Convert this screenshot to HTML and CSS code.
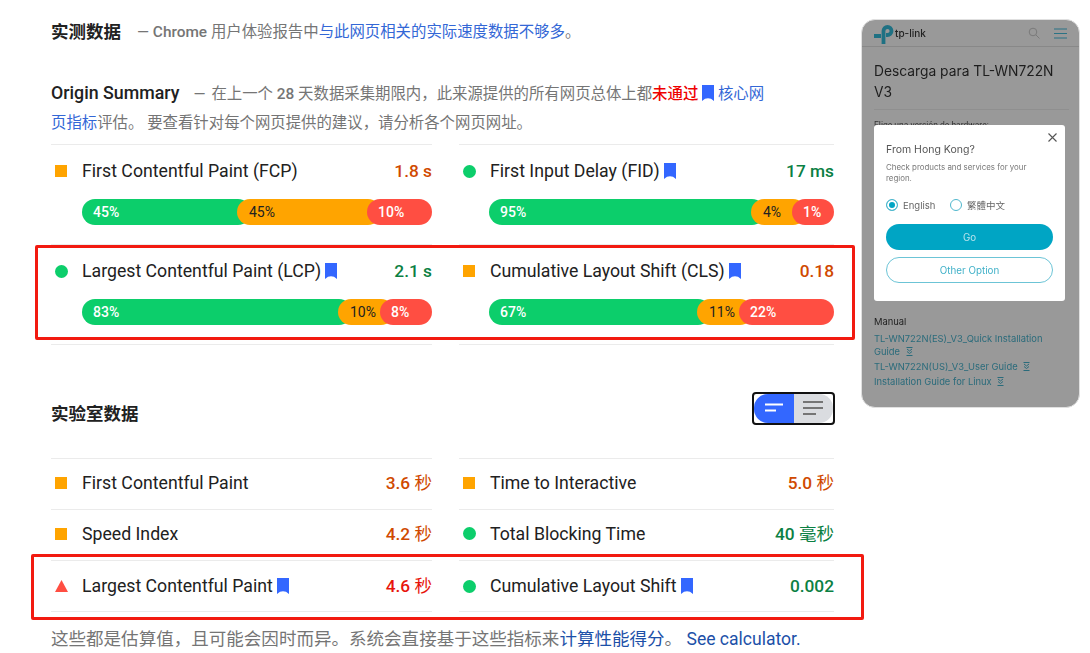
FILE: index.html
```html
<!DOCTYPE html>
<html lang="zh-CN">
<head>
  <meta charset="UTF-8">
  <meta name="viewport" content="width=device-width, initial-scale=1">
  <title>PageSpeed Insights</title>
  <link rel="stylesheet" href="styles.css">
</head>
<body>
  <svg class="defs" width="0" height="0">
    <symbol id="bookmark" viewBox="0 0 12 16"><path d="M0 0h12v16l-3-2.2-3-.6-3 .6-3 2.2z"/></symbol>
    <symbol id="dl" viewBox="0 0 7 9"><path d="M.5.500h6M1 2l2.500 2L6 2M1 4.500l2.500 2 2.500-2M.5 8.500h6" fill="none" stroke="#2a6b7b"/></symbol>
  </svg>

  <main class="report">
    <header class="field-head">
      <h2>实测数据</h2>
      <p class="note">— <span class="latin">Chrome</span> 用户体验报告中<a href="#">与此网页相关的实际速度数据不够多</a>。</p>
    </header>

    <p class="origin"><strong>Origin Summary</strong><span class="dash">—</span>在上一个 <span class="latin">28</span> 天数据采集期限内，此来源提供的所有网页总体上都<b class="fail-text">未通过</b> <svg class="mark"><use href="#bookmark"/></svg> <a href="#">核心网页指标</a>评估。 要查看针对每个网页提供的建议，请分析各个网页网址。</p>

    <section class="field-grid">
      <div class="field-row">
        <div class="title-line"><i class="ic square"></i><span class="name">First Contentful Paint (FCP)</span><span class="val avg">1.8 s</span></div>
        <div class="bar"><span class="seg good" style="width:169px">45%</span><span class="seg mid" style="width:144px">45%</span><span class="seg bad" style="width:65px">10%</span></div>
      </div>
      <div class="field-row">
        <div class="title-line"><i class="ic dot"></i><span class="name">First Input Delay (FID)</span><svg class="mark"><use href="#bookmark"/></svg><span class="val pass">17 ms</span></div>
        <div class="bar"><span class="seg good" style="width:276px">95%</span><span class="seg mid" style="width:55px">4%</span><span class="seg bad" style="width:42px">1%</span></div>
      </div>
      <div class="field-row">
        <div class="title-line"><i class="ic dot"></i><span class="name">Largest Contentful Paint (LCP)</span><svg class="mark"><use href="#bookmark"/></svg><span class="val pass">2.1 s</span></div>
        <div class="bar"><span class="seg good" style="width:270px">83%</span><span class="seg mid" style="width:56px">10%</span><span class="seg bad" style="width:52px">8%</span></div>
      </div>
      <div class="field-row">
        <div class="title-line"><i class="ic square"></i><span class="name">Cumulative Layout Shift (CLS)</span><svg class="mark"><use href="#bookmark"/></svg><span class="val avg">0.18</span></div>
        <div class="bar"><span class="seg good" style="width:222px">67%</span><span class="seg mid" style="width:56px">11%</span><span class="seg bad" style="width:95px">22%</span></div>
      </div>
    </section>

    <header class="lab-head">
      <h2>实验室数据</h2>
      <div class="toggle">
        <span class="toggle-side on"><svg width="18" height="10" viewBox="0 0 18 10"><path d="M0 1.500h18M0 7.500h11" stroke="#fff" stroke-width="2"/></svg></span>
        <span class="toggle-side"><svg width="20" height="14" viewBox="0 0 20 14"><path d="M0 1h20M0 7h20M0 13h13" stroke="#757575" stroke-width="2"/></svg></span>
      </div>
    </header>

    <section class="lab-grid">
      <div class="lab-row"><i class="ic square"></i><span class="name">First Contentful Paint</span><span class="val avg">3.6 <em>秒</em></span></div>
      <div class="lab-row"><i class="ic square"></i><span class="name">Time to Interactive</span><span class="val avg">5.0 <em>秒</em></span></div>
      <div class="lab-row"><i class="ic square"></i><span class="name">Speed Index</span><span class="val avg">4.2 <em>秒</em></span></div>
      <div class="lab-row"><i class="ic dot"></i><span class="name">Total Blocking Time</span><span class="val pass">40 <em>毫秒</em></span></div>
      <div class="lab-row"><i class="ic tri"></i><span class="name">Largest Contentful Paint</span><svg class="mark"><use href="#bookmark"/></svg><span class="val fail">4.6 <em>秒</em></span></div>
      <div class="lab-row"><i class="ic dot"></i><span class="name">Cumulative Layout Shift</span><svg class="mark"><use href="#bookmark"/></svg><span class="val pass">0.002</span></div>
    </section>

    <p class="foot">这些都是估算值，且可能会因时而异。系统会直接基于这些指标来<a href="#">计算性能得分</a>。 <a href="#">See calculator.</a></p>

    <div class="callout callout-field"></div>
    <div class="callout callout-lab"></div>
  </main>

  <aside class="thumb">
    <div class="thumb-head">
      <svg class="tp-logo" width="19" height="19" viewBox="0 0 19 19"><path d="M9.500 19V6a4 4 0 1 1 4 4H12M0 11h7" fill="none" stroke="#1f7183" stroke-width="3.800"/></svg>
      <span class="tp-name">tp-link</span>
      <svg class="tp-search" width="12" height="12" viewBox="0 0 12 12"><circle cx="5" cy="5" r="3.800" fill="none" stroke="#7a7a7a"/><path d="M8 8l3.500 3.500" stroke="#7a7a7a"/></svg>
      <svg width="13" height="11" viewBox="0 0 13 11"><path d="M0 1h13M0 5.500h13M0 10h13" stroke="#2a7385" stroke-width="1.200"/></svg>
    </div>
    <h3>Descarga para TL-WN722N V3</h3>
    <p class="thumb-hw">Elige una versión de hardware:</p>
    <div class="thumb-links">
      <a href="#" class="peek">TL-WN722N(US)_V3_Datasheet <svg class="dl"><use href="#dl"/></svg></a>
      <p class="thumb-label">Manual</p>
      <a href="#">TL-WN722N(ES)_V3_Quick Installation Guide <svg class="dl"><use href="#dl"/></svg></a>
      <a href="#">TL-WN722N(US)_V3_User Guide <svg class="dl"><use href="#dl"/></svg></a>
      <a href="#">Installation Guide for Linux <svg class="dl"><use href="#dl"/></svg></a>
    </div>

    <div class="modal">
      <svg class="modal-x" width="9" height="9" viewBox="0 0 9 9"><path d="M.5.500l8 8M8.500.500l-8 8" stroke="#555" stroke-width="1.100"/></svg>
      <p class="modal-title">From Hong Kong?</p>
      <p class="modal-text">Check products and services for your region.</p>
      <div class="modal-radios">
        <span class="radio checked"></span><span class="radio-text">English</span>
        <span class="radio"></span><span class="radio-text">繁體中文</span>
      </div>
      <div class="btn btn-go">Go</div>
      <div class="btn btn-other">Other Option</div>
    </div>
  </aside>
</body>
</html>
```

FILE: styles.css
```css
* { box-sizing: border-box; }
html, body {
  height: 653px;
  overflow: hidden;
}
body {
  margin: 0;
  background: #fff;
  color: #212121;
  font-family: Roboto, "Noto Sans CJK SC", sans-serif;
  display: flex;
  align-items: flex-start;
}
a {
  color: #3367d6;
  text-decoration: none;
}
p, h2, h3 {
  margin: 0;
}
.defs {
  position: absolute;
}

.report {
  position: relative;
  width: 783px;
  margin-left: 51px;
}
.field-head {
  display: flex;
  align-items: center;
  height: 30px;
  margin-top: 15px;
}
h2 {
  font-size: 17.500px;
  font-weight: 700;
  color: #212121;
}
.note {
  font-size: 15.400px;
  color: #757575;
  margin-left: 16px;
}
.latin {
  font-weight: 500;
}
.origin {
  margin-top: 33px;
  width: 716px;
  height: 58px;
  font-size: 15.400px;
  line-height: 29px;
  color: #757575;
}
.origin strong {
  font-size: 17.800px;
  font-weight: 500;
  color: #212121;
}
.dash {
  margin: 0 6px 0 14px;
}
.fail-text {
  color: #e00;
  font-weight: 500;
}
.origin .mark {
  vertical-align: -2px;
  margin: 0;
}

.field-grid {
  display: grid;
  grid-template-columns: 381px 375px;
  column-gap: 27px;
  margin-top: 8px;
}
.field-row {
  height: 100px;
  border-top: 1px solid #ebebeb;
  padding-top: 11px;
}
.field-row:nth-child(n+3) {
  height: 101px;
  border-bottom: 1px solid #ebebeb;
}
.field-row:nth-child(even) .bar {
  margin-left: 30px;
}
.title-line {
  display: flex;
  align-items: center;
  height: 30px;
}
.ic {
  flex: none;
  display: block;
  width: 12px;
  height: 12px;
  margin: 0 15px 0 4px;
}
.square {
  background: #ffa400;
}
.dot {
  width: 13px;
  height: 13px;
  margin-right: 14px;
  border-radius: 50%;
  background: #0cce6b;
}
.tri {
  width: 13px;
  height: 12px;
  margin-right: 14px;
  background: #ff4e42;
  clip-path: polygon(50% 0, 100% 100%, 0 100%);
}
.name {
  font-size: 17.700px;
  color: #212121;
  white-space: nowrap;
}
.mark {
  width: 12px;
  height: 16px;
  margin-left: 4px;
  fill: #3367ff;
  flex: none;
}
.val {
  margin-left: auto;
  font-size: 17.300px;
  line-height: 20px;
  font-weight: 500;
  white-space: nowrap;
}
.val em {
  font-style: normal;
  font-weight: 400;
  font-size: 17.500px;
  line-height: 0;
}
.avg { color: #d04900; }
.pass { color: #0b8043; }
.fail { color: #e8140c; }

.bar {
  display: flex;
  margin: 13px 0 0 31px;
  height: 26px;
}
.seg {
  flex: none;
  height: 26px;
  line-height: 26px;
  padding-left: 11px;
  margin-right: -14px;
  border-radius: 13px;
  font-size: 14px;
  font-weight: 500;
  white-space: nowrap;
  overflow: hidden;
}
.seg:last-child {
  margin-right: 0;
}
.good {
  background: #0cce6b;
  color: #fff;
}
.mid {
  background: #ffa400;
  color: #212121;
  font-weight: 400;
  padding-left: 12px;
}
.bad {
  background: #ff4e42;
  color: #fff;
}

.lab-head {
  display: flex;
  align-items: center;
  justify-content: space-between;
  margin-top: 46px;
  height: 34px;
}
.lab-head h2 {
  padding-top: 8px;
}
.toggle {
  display: flex;
  width: 83px;
  height: 33px;
  border: 2px solid #111;
  border-radius: 4px;
  overflow: hidden;
  background: #fff;
  margin-right: -1px;
}
.toggle-side {
  flex: 1;
  display: flex;
  align-items: center;
  justify-content: center;
  background: #dadce0;
  border-radius: 0 14px 14px 0;
}
.toggle-side.on {
  background: #3367ff;
  border-radius: 14px 0 0 14px;
}

.lab-grid {
  display: grid;
  grid-template-columns: 381px 375px;
  column-gap: 27px;
  margin-top: 33px;
}
.lab-row {
  display: flex;
  align-items: center;
  height: 51px;
  padding-bottom: 3px;
  border-top: 1px solid #ebebeb;
}
.lab-row:nth-child(n+5) {
  border-bottom: 1px solid #ebebeb;
  height: 52px;
  padding-bottom: 0;
}
.foot {
  margin-top: 13px;
  font-size: 17.550px;
  color: #757575;
  white-space: nowrap;
}
.foot a {
  color: #1c50a8;
}

.callout {
  position: absolute;
  border: 3px solid #f21a10;
  border-radius: 2px;
}
.callout-field {
  left: -16px;
  top: 245px;
  width: 820px;
  height: 95px;
}
.callout-lab {
  left: -20px;
  top: 554px;
  width: 833px;
  height: 66px;
}

.thumb {
  position: relative;
  flex: none;
  width: 219px;
  height: 389px;
  margin: 19px 0 0 27px;
  border: 1px solid #e0e0e0;
  border-radius: 14px;
  background: #999;
  overflow: hidden;
  filter: blur(.3px);
}
.thumb-head {
  display: flex;
  align-items: center;
  height: 27px;
  padding: 0 12px;
  border-bottom: 1px solid #888;
}
.tp-logo {
  margin-top: 2px;
  overflow: visible;
}
.tp-name {
  margin-left: 2px;
  font-size: 10px;
  font-weight: 500;
  color: #222;
  font-family: Inter, sans-serif;
}
.tp-search {
  margin: 0 14px 0 auto;
}
.thumb h3 {
  margin: 14px 12px 0;
  border-bottom: 1px solid #8f8f8f;
  font-size: 13.800px;
  line-height: 21px;
  font-weight: 400;
  color: #1d1d1d;
  height: 49px;
  width: 195px;
  font-family: Inter, Roboto, sans-serif;
}
.thumb-hw {
  margin: 10px 12px 0;
  font-size: 8.500px;
  color: #333;
}
.thumb-links {
  margin: 160px 12px 0;
  font-family: Inter, Roboto, sans-serif;
  font-size: 9.400px;
  line-height: 12.500px;
}
.thumb-label {
  color: #222;
  margin-bottom: 5px;
}
.thumb-links a {
  display: block;
  color: #2a6b7b;
  margin-bottom: 2.500px;
  width: 180px;
}
.thumb-links .peek {
  margin-bottom: 13px;
}
.dl {
  width: 7px;
  height: 9px;
  margin-left: 3px;
  vertical-align: -1px;
}

.modal {
  position: absolute;
  left: 12px;
  top: 105px;
  width: 191px;
  height: 176px;
  padding: 18px 12px 0;
  background: #fff;
  border-radius: 3px;
  font-family: Inter, Roboto, sans-serif;
}
.modal-x {
  position: absolute;
  top: 8px;
  right: 8px;
}
.modal-title {
  font-size: 10.500px;
  line-height: 14px;
  color: #555;
}
.modal-text {
  margin-top: 5px;
  width: 150px;
  font-size: 7.900px;
  line-height: 10.500px;
  color: #777;
}
.modal-radios {
  display: flex;
  align-items: center;
  margin-top: 16px;
  height: 12px;
}
.radio {
  flex: none;
  width: 12px;
  height: 12px;
  border: 1px solid #4fb7cd;
  border-radius: 50%;
  background: #fff;
}
.radio.checked {
  background: #00a5c4;
  box-shadow: inset 0 0 0 2px #fff;
}
.radio-text {
  width: 47px;
  margin-left: 5px;
  font-size: 9.500px;
  color: #666;
}
.radio-text:last-child {
  font-family: "Noto Sans CJK TC", sans-serif;
  width: auto;
}
.btn {
  display: flex;
  align-items: center;
  justify-content: center;
  height: 26px;
  border-radius: 13px;
  font-size: 9.800px;
}
.btn-go {
  margin-top: 13px;
  background: #00a5c4;
  color: #b8e3ec;
}
.btn-other {
  margin-top: 7px;
  border: 1px solid #6cc4d6;
  color: #3fb0c8;
}
```
